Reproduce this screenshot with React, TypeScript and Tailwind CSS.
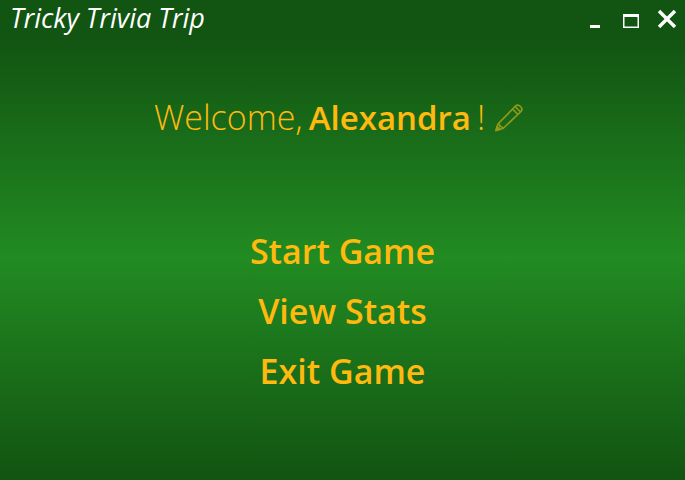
import React from "react";

const menuItems = ["Start Game", "View Stats", "Exit Game"];

function TitleBar() {
  return (
    <header className="flex h-10 items-center justify-between bg-[#125412] pl-[10px] pr-2 text-white">
      <h1 className="pb-1 font-['Open_Sans','Lato',sans-serif] text-[27px] italic leading-9">
        Tricky Trivia Trip
      </h1>
      <div className="flex items-center gap-4 pb-1">
        <button type="button" aria-label="Minimize" className="h-5 w-5">
          <svg viewBox="0 0 20 20" className="h-5 w-5" fill="currentColor" shapeRendering="crispEdges">
            <rect x="5" y="17" width="10" height="3" />
          </svg>
        </button>
        <button type="button" aria-label="Maximize" className="h-5 w-5">
          <svg viewBox="0 0 20 20" className="h-5 w-5" fill="currentColor">
            <path fillRule="evenodd" d="M2 6h16v14H2zM3.500 9v9.500h13V9z" />
          </svg>
        </button>
        <button type="button" aria-label="Close" className="h-5 w-5">
          <svg viewBox="0 0 20 20" className="h-5 w-5" fill="none" stroke="currentColor" strokeWidth="3.4">
            <path d="M2 3l16 16M18 3L2 19" />
          </svg>
        </button>
      </div>
    </header>
  );
}

function PencilIcon() {
  return (
    <svg viewBox="0 0 28 28" className="h-7 w-7" fill="none" stroke="currentColor" strokeWidth="1.7" strokeLinejoin="round">
      <path d="M1 26.500l2-6.500L20.500 2q2.500-2 5 0.500t0.500 5L8 24.500z" />
      <path d="M3 20q2 0 2 2.500 2.500 0 3 2M17.500 5l5.500 5.500M20 2.500l5.500 5.500" />
      <path d="M1 26.500l1.200-4 2.800 2.800z" fill="currentColor" />
    </svg>
  );
}

export default function App() {
  return (
    <div className="flex min-h-screen flex-col bg-[#125412] font-['Open_Sans','Noto_Sans',sans-serif] text-[#ffb90f]">
      <TitleBar />
      <main className="mb-1 flex flex-1 flex-col items-center bg-linear-to-b/srgb from-[#125412] via-[#228b22] to-[#125412] pt-[49px]">
        <div className="flex items-center pr-2">
          <h2 className="flex items-baseline gap-1.5 text-[34px] font-light leading-[56px]">
            <span>Welcome,</span>
            <strong className="text-[33px] font-semibold">Alexandra</strong>
            <span>!</span>
          </h2>
          <button type="button" aria-label="Edit name" className="ml-2.5 text-[#8f9a18]">
            <PencilIcon />
          </button>
        </div>
        <nav className="mt-[75px] flex flex-col items-center">
          {menuItems.map((item) => (
            <button key={item} type="button" className="h-[60px] text-[34px] font-semibold leading-[60px]">
              {item}
            </button>
          ))}
        </nav>
      </main>
    </div>
  );
}
